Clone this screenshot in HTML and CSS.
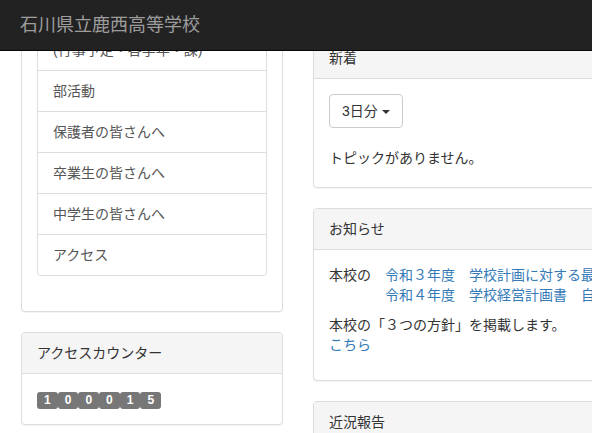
FILE: index.html
```html
<!DOCTYPE html>
<html lang="ja">
<head>
<meta charset="utf-8">
<title>石川県立鹿西高等学校</title>
<link rel="stylesheet" href="styles.css">
</head>
<body>
<nav class="navbar">
  <a class="brand" href="#">石川県立鹿西高等学校</a>
</nav>
<div class="layout">
  <aside class="col-side">
    <div class="panel panel-menu">
      <div class="panel-body">
        <ul class="list-group">
          <li class="list-item"><a href="#">(行事予定・各学年・課)</a></li>
          <li class="list-item"><a href="#">部活動</a></li>
          <li class="list-item"><a href="#">保護者の皆さんへ</a></li>
          <li class="list-item"><a href="#">卒業生の皆さんへ</a></li>
          <li class="list-item"><a href="#">中学生の皆さんへ</a></li>
          <li class="list-item"><a href="#">アクセス</a></li>
        </ul>
      </div>
    </div>
    <div class="panel">
      <div class="panel-heading">アクセスカウンター</div>
      <div class="panel-body">
        <span class="counter"><span class="digit">1</span><span class="digit">0</span><span class="digit">0</span><span class="digit">0</span><span class="digit">1</span><span class="digit">5</span></span>
      </div>
    </div>
  </aside>
  <main class="col-main">
    <section class="panel panel-first">
      <div class="panel-heading">新着</div>
      <div class="panel-body">
        <div class="btn-wrap">
          <button class="btn" type="button">3日分 <span class="caret"></span></button>
        </div>
        <p class="topic-empty">トピックがありません。</p>
      </div>
    </section>
    <section class="panel">
      <div class="panel-heading">お知らせ</div>
      <div class="panel-body">
        <p class="para">本校の　<a href="#">令和３年度</a>　<a href="#">学校計画に対する最終評価</a><br>　　　　<a href="#">令和４年度</a>　<a href="#">学校経営計画書</a>　<a href="#">自己評価表</a></p>
        <p class="para">本校の「３つの方針」を掲載します。<br><a href="#">こちら</a></p>
      </div>
    </section>
    <section class="panel">
      <div class="panel-heading">近況報告</div>
      <div class="panel-body">
        <p class="para">　</p>
      </div>
    </section>
  </main>
</div>
</body>
</html>
```
FILE: styles.css
```css
html, body {
  margin: 0;
  padding: 0;
  overflow: hidden;
  background: #fff;
}
body {
  width: 592px;
  height: 433px;
  font-family: "Liberation Sans", "Noto Sans CJK JP", sans-serif;
  font-size: 14px;
  line-height: 20px;
  color: #333;
}
a {
  color: #337ab7;
  text-decoration: none;
}
.navbar {
  position: fixed;
  top: 0;
  left: 0;
  right: 0;
  height: 51px;
  box-sizing: border-box;
  background: #222;
  border-bottom: 1px solid #080808;
  z-index: 10;
}
.brand {
  display: block;
  padding: 15px 15px 15px 20px;
  font-size: 18px;
  line-height: 20px;
  color: #9d9d9d;
}
.layout {
  display: flex;
  align-items: flex-start;
  padding-left: 6px;
  width: 1200px;
}
.col-side {
  flex: none;
  width: 262px;
  padding: 13px 15px 0;
}
.col-main {
  flex: none;
  width: 555px;
  padding: 37px 15px 0;
}
.panel {
  background: #fff;
  border: 1px solid #ddd;
  border-radius: 4px;
  box-shadow: 0 1px 1px rgba(0, 0, 0, 0.05);
  margin-bottom: 20px;
}
.panel-heading {
  background: #f5f5f5;
  border-bottom: 1px solid #ddd;
  border-radius: 3px 3px 0 0;
  padding: 10px 15px;
  color: #333;
}
.panel-body {
  padding: 15px;
}
.list-group {
  list-style: none;
  margin: 0 0 20px;
  padding: 0;
}
.list-item {
  border: 1px solid #ddd;
  margin-bottom: -1px;
  padding: 10px 15px;
  background: #fff;
}
.list-item:last-child {
  margin-bottom: 0;
  border-radius: 0 0 4px 4px;
}
.list-item a {
  color: #555;
}
.counter {
  display: inline-block;
  white-space: nowrap;
}
.digit {
  display: inline-block;
  background: #777;
  color: #fff;
  font-size: 12px;
  font-weight: bold;
  line-height: 1;
  padding: 2px 7px 3px;
  border-radius: 3px;
}
.btn-wrap {
  margin-bottom: 20px;
}
.btn {
  display: inline-block;
  font-family: inherit;
  font-size: 14px;
  line-height: 20px;
  color: #333;
  background: #fff;
  border: 1px solid #ccc;
  border-radius: 4px;
  padding: 6px 12px;
  height: 34px;
  box-sizing: border-box;
}
.caret {
  display: inline-block;
  width: 0;
  height: 0;
  vertical-align: middle;
  border-top: 4px solid #333;
  border-left: 4px solid transparent;
  border-right: 4px solid transparent;
}
.topic-empty {
  margin: 0 0 4px;
}
.para {
  margin: 0 0 10px;
  white-space: nowrap;
}
```
